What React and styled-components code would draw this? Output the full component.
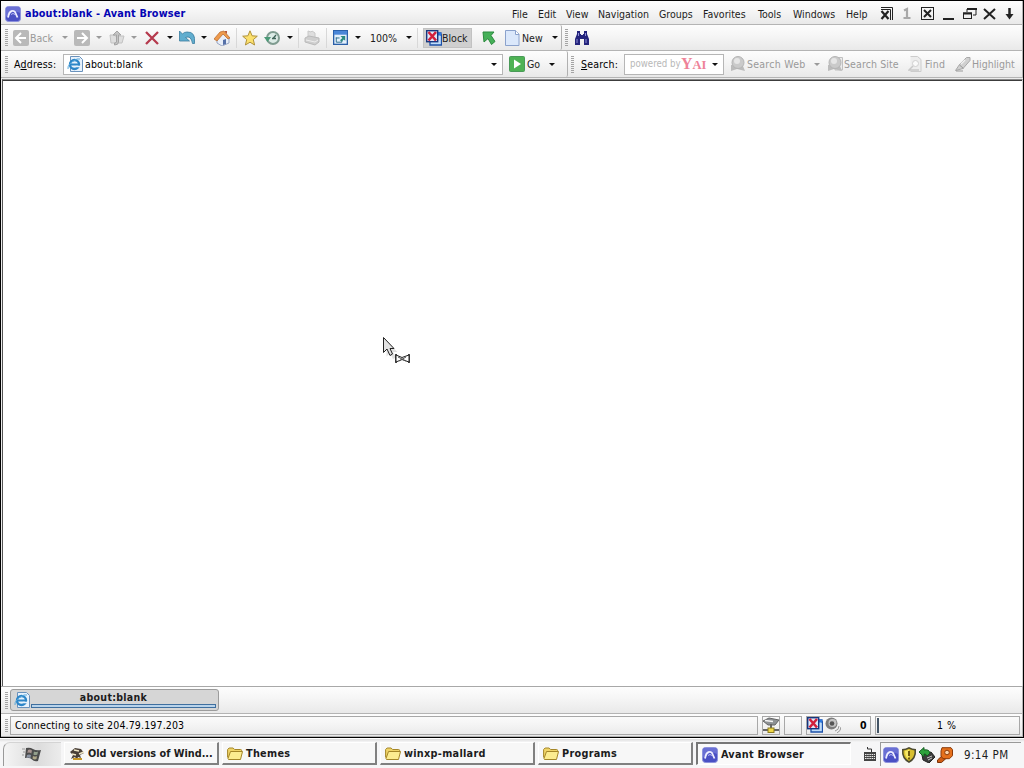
import React from "react";
import styled, { createGlobalStyle, css } from "styled-components";

const GlobalStyle = createGlobalStyle`
	* { box-sizing: border-box; }
	body {
		margin: 0;
		background: #f0f0f0;
		color: #1c1c1c;
		font-family: "DejaVu Sans Condensed", "DejaVu Sans", sans-serif;
		font-stretch: condensed;
		font-size: 10.5px;
		line-height: 14px;
		cursor: default;
		overflow: hidden;
	}
`;

const Desktop = styled.div`
	width: 1024px;
	height: 768px;
	display: flex;
	flex-direction: column;
`;

const Window = styled.div`
	height: 738px;
	border: 1px solid #000;
	background: #ececec;
	display: flex;
	flex-direction: column;
`;

const Band = styled.div`
	display: flex;
	align-items: center;
	flex: none;
	height: ${(p) => p.$h}px;
	padding-left: ${(p) => p.$pad || 0}px;
	border-bottom: 1px solid #b4b4b4;
	border-right: 1px solid #b4b4b4;
	background: linear-gradient(#fdfdfd, #f5f5f5 45%, #e9e9e9);
`;

const TitleBand = styled(Band)`
	padding-top: 2px;
`;

const TabBand = styled(Band)`
	border-top: 1px solid #a8a8a8;
`;

const SubBand = styled.div`
	display: flex;
	align-items: center;
	height: 100%;
	width: ${(p) => p.$w}px;
	border-right: 1px solid #b0b0b0;
	border-radius: 0 2px 2px 0;
`;

const Label = styled.span`
	flex: none;
	width: ${(p) => p.$w}px;
	margin-left: ${(p) => p.$ml || 0}px;
	letter-spacing: ${(p) => p.$ls || 0}px;
	white-space: pre;
	color: ${(p) => (p.$off ? "#9a9a9a" : "inherit")};
`;

const FieldLabel = styled(Label)`
	color: #000;
`;

const Title = styled.span`
	width: 487px;
	margin-left: 4px;
	font-size: 10.8px;
	font-weight: bold;
	letter-spacing: 0.14px;
	color: #0404b4;
`;

const Menu = styled.nav`
	display: flex;
	gap: 10px;
	width: 367px;
`;

const Grip = styled.i`
	flex: none;
	width: 3px;
	height: ${(p) => p.$h || 17}px;
	margin-left: ${(p) => (p.$ml === undefined ? 4 : p.$ml)}px;
	background: repeating-linear-gradient(#a4a4a4 0 1px, transparent 1px 2px);
`;

const Sep = styled.i`
	flex: none;
	width: 1px;
	height: 20px;
	margin-left: ${(p) => p.$ml}px;
	background: #d8d8d8;
`;

const Caret = styled.i`
	flex: none;
	width: 0;
	height: 0;
	margin-left: ${(p) => p.$ml}px;
	border: solid transparent;
	border-width: 3px 3px 0;
	border-top-color: ${(p) => (p.$off ? "#9a9a9a" : "#111")};
`;

const Svg = styled.svg`
	flex: none;
	display: block;
	margin-left: ${(p) => p.$ml || 0}px;
`;

const BlockButton = styled.div`
	display: flex;
	align-items: center;
	width: 49px;
	height: 20px;
	margin-left: 5px;
	background: #cfcfcf;
	border: 1px solid #c2c2c2;
`;

const Combo = styled.div`
	display: flex;
	align-items: center;
	width: ${(p) => p.$w}px;
	height: 21px;
	margin-left: 6px;
	background: #fff;
	border: 1px solid #b6b6b6;
	color: #000;
`;

const Powered = styled.span`
	flex: none;
	width: 50px;
	margin-left: 5px;
	font-size: 9.6px;
	color: #b8b8b8;
	white-space: pre;
`;

const Yahoo = styled.span`
	flex: none;
	width: 29px;
	margin-left: 1px;
	font: bold 16px/17px "Liberation Serif", serif;
	color: #ee8298;
	white-space: nowrap;
	small {
		font-size: 12.5px;
	}
`;

const Page = styled.main`
	flex: 1;
	margin: 1px 0 0 1px;
	border-top: 1px solid #8a8a8a;
	border-left: 1px solid #555;
	border-right: 1px solid #d0d0d0;
	box-shadow: inset 0 1px #3c3c3c;
	background: #fff;
`;

const Tab = styled.div`
	display: flex;
	align-items: flex-end;
	width: 209px;
	height: 22px;
	margin-left: 2px;
	padding: 0 2px 2px 3px;
	border: 1px solid #9c9c9c;
	border-radius: 3px;
	background: #d6d6d6;
`;

const TabBody = styled.div`
	flex: 1;
	text-align: center;
	font-weight: bold;
	letter-spacing: 0.3px;
	padding-right: 19px;
`;

const TabProgress = styled.div`
	height: 4px;
	margin: 0 -19px 0 1px;
	border: 1px solid #3f6f9f;
	background: #b9d3ea;
`;

const Pane = styled.div`
	display: flex;
	align-items: center;
	flex: none;
	width: ${(p) => p.$w}px;
	height: 19px;
	margin-left: ${(p) => p.$ml}px;
	border: 1px solid #a8a8a8;
	color: #000;
`;

const Taskbar = styled.footer`
	display: flex;
	align-items: flex-start;
	flex: 1;
	padding: 3px 0 0 3px;
	border-top: 1px solid #fff;
	background: linear-gradient(#dcdcdc, #f6f6f7 3px, #f6f6f7);
`;

const Start = styled.div`
	width: 58px;
	height: 24px;
	padding: 3px 0 0 18px;
	border-top: 1px solid #d4d4d4;
	border-left: 1px solid #999;
	border-radius: 7px 0 0 0;
	background: linear-gradient(90deg, #f4f4f4, #dcdcdc 60%, #ececec);
`;

const Task = styled.div`
	display: flex;
	align-items: center;
	width: 155px;
	height: 23px;
	margin-left: 3px;
	padding: 2px 0 0 4px;
	font-size: 10.8px;
	font-weight: bold;
	background: #f7f7f7;
	border: solid #fff;
	border-width: 1px 2px 2px 1px;
	border-right-color: #808080;
	border-bottom-color: #808080;
	${(p) =>
		p.$active &&
		css`
			border-width: 2px 1px 1px 2px;
			border-color: #777 #fff #fff #777;
			background: #fafafa;
		`}
`;

const Tray = styled.div`
	display: flex;
	align-items: center;
	width: 141px;
	height: 24px;
	margin-left: 4px;
	border-top: 1px solid #999;
	border-left: 1px solid #999;
	font-size: 11.5px;
`;

const Cursor = styled.div`
	position: absolute;
	left: 382px;
	top: 337px;
`;

const Icon = ({ ml, s = 16, children }) => (
	<Svg $ml={ml} width={s} height={s} viewBox="0 0 16 16">
		{children}
	</Svg>
);

const AvantIcon = (p) => (
	<Icon {...p}>
		<rect x=".5" y=".5" width="15" height="15" rx="3" fill="#4a50c4" stroke="#8d92dc" />
		<path d="M1 3q0-2 2-2h10q2 0 2 2v4Q8 3 1 11z" fill="#6a70d4" />
		<path d="M3 11.500Q4 5.500 7 5q2-.5 3 1l2.500 5.500" fill="none" stroke="#eef" strokeWidth="1.800" />
		<path d="M6 8.500Q8 6.500 10 8.500" fill="none" stroke="#b9bcf4" />
	</Icon>
);

const ArrowBox = ({ ml, flip }) => (
	<Icon ml={ml}>
		<rect width="16" height="16" rx="2" fill="#b9b9b9" />
		<path d="M3 8h10M8 3L3 8l5 5" transform={flip ? "matrix(-1 0 0 1 16 0)" : undefined} fill="none" stroke="#fff" strokeWidth="2" />
	</Icon>
);

const UpIcon = (p) => (
	<Icon {...p}>
		<path d="M1 5h4l1 1h9l-2 7H2z" fill="#dedede" stroke="#c2c2c2" />
		<path d="M8 1l4 4H9.500v7q0 3-4 3v-2q2 0 2-1V5H4z" fill="#c4c4c4" stroke="#a4a4a4" />
	</Icon>
);

const StopIcon = (p) => (
	<Icon {...p}>
		<path d="M2 2l12 12M14 2L2 14" stroke="#b53a4d" strokeWidth="2.300" />
	</Icon>
);

const UndoIcon = (p) => (
	<Icon {...p}>
		<path d="M.5 1v10h10L6.500 7.500Q12 5 13.500 13.500h2Q17 1.500 8 2 5 2 3.500 4z" fill="#62aecf" stroke="#3a7c9e" strokeWidth=".8" />
	</Icon>
);

const HomeIcon = (p) => (
	<Icon {...p}>
		<path d="M3 8l6-5 6 5v5l-7 3-5-3z" fill="#e8eef8" stroke="#8494b8" strokeWidth=".8" />
		<path d="M0 9L6 2l4-1 6 7-2 1-5-5-6 7z" fill="#ee9a4c" stroke="#b4652a" strokeWidth=".7" />
		<path d="M9 10l3-1v5l-3 1z" fill="#5570a8" />
		<path d="M11 1h2v3l-2-2z" fill="#b95a3a" />
	</Icon>
);

const StarIcon = (p) => (
	<Icon {...p}>
		<path d="M8 .8l2.100 5 5.200.4-4 3.400 1.300 5.400L8 12.200 3.400 15l1.300-5.400-4-3.400 5.200-.4z" fill="#fbe06d" stroke="#b0923c" />
	</Icon>
);

const HistoryIcon = (p) => (
	<Icon {...p}>
		<circle cx="9" cy="8" r="6" fill="#dcebe6" stroke="#7f9c90" strokeWidth="2" />
		<path d="M0 7h7L3.500 12z" fill="#4b9a77" />
		<path d="M9 8.500L12 5M8 8.500h4" stroke="#41655a" strokeWidth="1.300" />
	</Icon>
);

const PrintIcon = (p) => (
	<Icon {...p}>
		<path d="M4 8V1l3 1 1-1 3 2v6" fill="#dedede" stroke="#c8c8c8" />
		<path d="M1 8l4-2 10 2v4l-4 3-10-3z" fill="#cecece" stroke="#bababa" />
		<path d="M2 10l9 2 3-2" stroke="#eee" fill="none" />
	</Icon>
);

const ResizeIcon = (p) => (
	<Icon {...p} s={15}>
		<rect x=".7" y=".7" width="14.600" height="14.600" fill="#e3effb" stroke="#2a5fa8" strokeWidth="1.400" />
		<path d="M1 1h14v4H1z" fill="#4a86d8" />
		<path d="M3 8.500h4M3.500 8v5h6v-3" fill="none" stroke="#2a6b8c" />
		<path d="M8 6.500h5v5L11.500 10 9 12.500 7.500 11 10 8.500z" fill="#2a8a80" />
	</Icon>
);

const BlockIcon = (p) => (
	<Icon {...p}>
		<path d="M10 3h5v2h.5v10H4v-4" fill="#bedcfa" stroke="#1c50a8" strokeWidth="1.300" />
		<path d="M10 4h5" stroke="#2a78e0" strokeWidth="3" />
		<rect x=".7" y=".7" width="11" height="11" fill="#dfe8f8" stroke="#16357f" strokeWidth="1.400" />
		<path d="M2.500 2l7.500 8.500M10 2L2.500 10.500" stroke="#d21f3c" strokeWidth="2.600" />
	</Icon>
);

const GreenArrow = (p) => (
	<Icon {...p}>
		<path d="M2 2h11l-3 3.500 4 6-3.500 3L7 8.500 3 12z" fill="#45b058" stroke="#2b8a3e" />
	</Icon>
);

const PageIcon = (p) => (
	<Icon {...p}>
		<path d="M.5.5h10l3.500 3.500v11.500h-13.500z" fill="#dbe8fb" stroke="#8ba2cc" />
		<path d="M10.500.5v4h3.500" fill="#fff" stroke="#8ba2cc" />
	</Icon>
);

const Binoculars = (p) => (
	<Icon {...p}>
		<path d="M3 1h3v3h1v1h2V4h1V1h3v3l2 5v6h-5V9H6v6H1V9l2-5z" fill="#24247c" />
		<path d="M3 9v4M12 9v4M4.500 3v3M11.500 3v3" stroke="#8f8fd6" />
	</Icon>
);

const IeIcon = (p) => (
	<Icon {...p}>
		<path d="M3.500.5h9l3 3v12h-12z" fill="#e8f2fc" stroke="#6a92bc" />
		<circle cx="7.500" cy="8.500" r="4.500" fill="none" stroke="#2d86c8" strokeWidth="2.400" />
		<path d="M4 8.500h7.500" stroke="#2d86c8" strokeWidth="2" />
		<path d="M9.500 10.500h4" stroke="#e8f2fc" strokeWidth="1.600" />
		<path d="M1 13Q0 8 10 3l3 0" fill="none" stroke="#58a8dc" />
	</Icon>
);

const GoIcon = (p) => (
	<Icon {...p}>
		<rect x=".5" y=".5" width="15" height="15" rx="1" fill="#4eb254" stroke="#4a9a58" />
		<path d="M5 3.500v9l7-4.500z" fill="#fff" />
	</Icon>
);

const SearchIcon = ({ ml, page }) => (
	<Icon ml={ml}>
		{page && <path d="M8 1.500h7.500V14H8z" fill="#ececec" stroke="#c0c0c0" />}
		<path d="M1 9v6l6-2 8 2-2-5z" fill="#bcbcbc" />
		<circle cx="8" cy="6.500" r="6" fill="#cacaca" stroke="#b4b4b4" />
		<circle cx="7" cy="5" r="3" fill="#e6e6e6" />
	</Icon>
);

const FindIcon = (p) => (
	<Icon {...p}>
		<path d="M2.500.5h7l3.500 3v12H2.500" fill="#ededed" stroke="#cccccc" />
		<circle cx="7.500" cy="7.500" r="3" fill="#fafafa" stroke="#cfcfcf" />
		<path d="M5 10l-4 4h10" fill="none" stroke="#c8c8c8" strokeWidth="1.500" />
	</Icon>
);

const PenIcon = (p) => (
	<Icon {...p}>
		<path d="M.5 14.500l4-6 7-7 3.500 0v3L8 12.500z" fill="#d0d0d0" stroke="#a8a8a8" />
		<path d="M4.500 9l4 3.500M1 15h7" stroke="#999" />
		<path d="M10 4l-4 4" stroke="#f2f2f2" strokeWidth="1.500" />
	</Icon>
);

const WindowControls = () => (
	<Svg width="140" height="16" viewBox="0 0 140 16" fill="none" stroke="#222">
		<path d="M2 1.500h11.500V14M2 3.500h9.500V14" />
		<path d="M2.500 5l7 8M9.500 5l-7 8" strokeWidth="2.200" />
		<path d="M25 4.500l3-1.500v9M24.500 12h7" stroke="#a8a8a8" strokeWidth="2.200" />
		<rect x="42.500" y="1.500" width="12" height="12" />
		<path d="M45 4l7 7M52 4l-7 7" strokeWidth="2" />
		<path d="M64 13h11" strokeWidth="2" />
		<path d="M88 6V3h9v6h-3" />
		<path d="M88 3h10" strokeWidth="2" />
		<rect x="84.500" y="7" width="8" height="5.500" />
		<path d="M84 7.500h9" strokeWidth="2" />
		<path d="M105 3l11 10M116 3l-11 10" strokeWidth="2" />
		<path d="M130.500 2v7" strokeWidth="2.500" />
		<path d="M126.500 8h8l-4 5.500z" fill="#222" stroke="none" />
	</Svg>
);

const FolderIcon = () => (
	<Icon>
		<path d="M.6 11.500V3.500l1.500-1.500h4l1.500 1.500h6q1 0 1 1v3" fill="#f0d468" stroke="#a48628" />
		<path d="M1 12.500L3.500 5.500h12l-2 8h-12z" fill="#fcec90" stroke="#a48628" />
	</Icon>
);

const BirdIcon = () => (
	<Icon>
		<path d="M1 6l5-4 6 1 3 4-4 2 1 3-3-1-1 3-2-3-4 2 2-4z" fill="#4a4038" />
		<path d="M5 4l5 1M10 8l5-2M3 8l4 1" stroke="#f0e6c8" strokeWidth="1.500" />
		<path d="M4 13h9" stroke="#c89828" strokeWidth="2" />
	</Icon>
);

const FlagIcon = () => (
	<Svg width="20" height="17" viewBox="0 0 20 17">
		<path d="M4 2q4-1 7 1t8 1l-3 11q-4 1-6-1.500t-7-1.500z" fill="#4c4c4c" />
		<path d="M6 4q2-1 4 .5L9.300 7.500q-2-1.500-4-.5z" fill="#a89490" />
		<path d="M12 5.500q2 1 4 0l-.6 3q-2 1-4 0z" fill="#94a08c" />
		<path d="M5 9q2-1 4 0l-.6 3q-2-1-4 0z" fill="#8c94a4" />
		<path d="M11 10q2 1 4 0l-.5 3q-2 1-4-.5z" fill="#b0a888" />
		<path d="M0 3h3M1 6h2M0 9h2" stroke="#999" />
	</Svg>
);

const NetIcon = () => (
	<Icon>
		<path d="M0 4l6-3 10 2-4 5H5z" fill="#8d9194" stroke="#666" />
		<path d="M2 3.500l8 1" stroke="#f5f5f5" strokeWidth="1.500" />
		<path d="M8 7v6M0 13h16" stroke="#666" strokeWidth="2" />
		<rect x="5" y="11" width="6" height="4.500" fill="#f0d848" stroke="#8c7a20" />
	</Icon>
);

const SpeakerIcon = (p) => (
	<Icon {...p}>
		<circle cx="6.500" cy="6.500" r="6" fill="#7d7d7d" />
		<circle cx="7.500" cy="6" r="4" fill="#c4c4c4" />
		<circle cx="7" cy="6.500" r="2.300" fill="#555" />
		<path d="M10 14q4-1 4-5M12 16q4-2 4-6" fill="none" stroke="#999" />
	</Icon>
);

const KeyboardIcon = (p) => (
	<Svg $ml={p.ml} width="12" height="20" viewBox="0 0 12 20">
		<path d="M3.500 5v2h4v3" fill="none" stroke="#333" />
		<rect y="10" width="12" height="9" fill="#444" />
		<path d="M1 12.500h10M1 14.500h10M1 16.500h10" stroke="#eee" strokeDasharray="1.500 .7" />
	</Svg>
);

const ShieldIcon = (p) => (
	<Icon {...p}>
		<path d="M1 2q4 0 7-2 3 2 7 2 1 10-7 14Q0 12 1 2z" fill="#4c4a30" />
		<path d="M2.500 3.500Q6 3 8 1.800q2 1.200 5.500 1.700Q14 10.500 8 14 2 10.500 2.500 3.500z" fill="#d8c030" />
		<path d="M4 4q2-.2 4-1.200V13Q4 10 4 4z" fill="#f6e868" />
		<path d="M8 4v5M8 10.500v2" stroke="#6e5a10" strokeWidth="2" />
	</Icon>
);

const PlugIcon = (p) => (
	<Icon {...p}>
		<path d="M3 8l9-3 4 5-6 6-6-3z" fill="#3c3c3c" stroke="#222" />
		<path d="M8 11l5-2M9 13l4-2" stroke="#c8c8c8" />
		<path d="M0 5l5-4.500v2.500q5-1 6 3l-3 3Q7 6.500 5 7v3z" fill="#2ea33c" stroke="#145c20" />
	</Icon>
);

const KeyIcon = (p) => (
	<Icon {...p}>
		<path d="M6 8l-5.500 5v2.500h4l5-4.500" fill="#d05c14" stroke="#7a3208" />
		<path d="M5 .7h9l1.500 2v6l-3 3H6L4 9V4z" fill="#e5701c" stroke="#8a3a0a" />
		<circle cx="10" cy="5.500" r="2.300" fill="#fbd4ac" stroke="#8a3a0a" />
	</Icon>
);

const menus = [
	["File", 16],
	["Edit", 18],
	["View", 22],
	["Navigation", 51],
	["Groups", 34],
	["Favorites", 45],
	["Tools", 25],
	["Windows", 43],
	["Help", 21],
];

const folders = ["Themes", "winxp-mallard", "Programs"];

export default function App() {
	return (
		<Desktop>
			<GlobalStyle />
			<Window>
				<TitleBand $h={24} $pad={4}>
					<AvantIcon />
					<Title>about:blank - Avant Browser</Title>
					<Menu>
						{menus.map(([name, w]) => (
							<Label key={name} $w={w}>
								{name}
							</Label>
						))}
					</Menu>
					<WindowControls />
				</TitleBand>
				<Band $h={26}>
					<SubBand $w={561}>
						<Grip />
						<ArrowBox ml={5} />
						<Label $ml={1} $w={24} $off>Back</Label>
						<Caret $ml={8} $off />
						<ArrowBox ml={6} flip />
						<Caret $ml={6} $off />
						<UpIcon ml={7} />
						<Caret $ml={6} $off />
						<StopIcon ml={7} />
						<Caret $ml={7} />
						<UndoIcon ml={6} />
						<Caret $ml={6} />
						<HomeIcon ml={7} />
						<Sep $ml={6} />
						<StarIcon ml={5} />
						<HistoryIcon ml={6} />
						<Caret $ml={7} />
						<Sep $ml={5} />
						<PrintIcon ml={5} />
						<Sep $ml={6} />
						<ResizeIcon ml={6} />
						<Caret $ml={7} />
						<Label $ml={9} $w={29}>100%</Label>
						<Caret $ml={7} />
						<Sep $ml={5} />
						<BlockButton>
							<BlockIcon ml={2} />
							<Label $w={27}>Block</Label>
						</BlockButton>
						<GreenArrow ml={9} />
						<PageIcon ml={8} />
						<Label $ml={1} $w={23}>New</Label>
						<Caret $ml={7} />
					</SubBand>
					<Grip $ml={3} />
					<Binoculars ml={6} />
				</Band>
				<Band $h={27}>
					<SubBand $w={567}>
						<Grip />
						<FieldLabel $ml={6} $w={43} $ls={0.2}>
							A<u>d</u>dress:
						</FieldLabel>
						<Combo $w={440}>
							<IeIcon ml={3} />
							<Label $ml={2} $w={401} $ls={0.15}>about:blank</Label>
							<Caret $ml={5} />
						</Combo>
						<GoIcon ml={6} />
						<Label $ml={2} $w={14}>Go</Label>
						<Caret $ml={8} />
					</SubBand>
					<Grip $ml={3} />
					<FieldLabel $ml={7} $w={37} $ls={0.2}>
						<u>S</u>earch:
					</FieldLabel>
					<Combo $w={100}>
						<Powered>powered by</Powered>
						<Yahoo>
							Y<small>AI</small>
						</Yahoo>
						<Caret $ml={2} />
					</Combo>
					<SearchIcon ml={6} />
					<Label $ml={1} $w={59} $ls={0.25} $off>Search Web</Label>
					<Caret $ml={8} $off />
					<SearchIcon ml={7} page />
					<Label $ml={1} $w={55} $ls={0.1} $off>Search Site</Label>
					<FindIcon ml={9} />
					<Label $ml={1} $w={21} $ls={0.2} $off>Find</Label>
					<PenIcon ml={9} />
					<Label $ml={1} $w={43} $off>Highlight</Label>
				</Band>
				<Page />
				<TabBand $h={28}>
					<Grip $h={17} />
					<Tab>
						<IeIcon />
						<TabBody>
							about:blank
							<TabProgress />
						</TabBody>
					</Tab>
				</TabBand>
				<Band $h={23}>
					<Grip $h={13} />
					<Pane $w={748} $ml={2}>
						<Label $ml={4} $w={200} $ls={0.15}>Connecting to site 204.79.197.203</Label>
					</Pane>
					<Pane $w={18} $ml={4}>
						<NetIcon />
					</Pane>
					<Pane $w={18} $ml={4} />
					<Pane $w={65} $ml={4}>
						<BlockIcon />
						<SpeakerIcon ml={2} />
						<Label $ml={19} $w={8}>
							<b>0</b>
						</Label>
					</Pane>
					<Pane $w={145} $ml={4}>
						<Svg $ml={1} width="3" height="15">
							<path d="M1 0v15" stroke="#456" strokeWidth="2" />
						</Svg>
						<Label $ml={57} $w={30} $ls={0.5}>1 %</Label>
					</Pane>
				</Band>
			</Window>
			<Taskbar>
				<Start>
					<FlagIcon />
				</Start>
				<Task>
					<BirdIcon />
					<Label $ml={3}>Old versions of Wind...</Label>
				</Task>
				{folders.map((name) => (
					<Task key={name}>
						<FolderIcon />
						<Label $ml={3} $ls={0.28}>{name}</Label>
					</Task>
				))}
				<Task $active>
					<AvantIcon />
					<Label $ml={3} $ls={0.24}>Avant Browser</Label>
				</Task>
				<KeyboardIcon ml={13} />
				<Tray>
					<AvantIcon ml={2} />
					<ShieldIcon ml={2} />
					<PlugIcon ml={2} />
					<KeyIcon ml={2} />
					<Label $ml={11} $w={46} $ls={0.4}>9:14 PM</Label>
				</Tray>
			</Taskbar>
			<Cursor>
				<svg width="32" height="30" viewBox="0 0 32 30">
					<path d="M2.500 2.500v15l3.500-3.500 3 6 3-1.500-3-5.500h4.500z" fill="#888" opacity=".25" transform="translate(2 2)" />
					<path d="M1.500.5v15l3.500-3.500 3 6.500 2.500-1.500-2.500-5.500H12z" fill="#e2e2e2" stroke="#222" />
					<path d="M14 17v9M27 17v9" stroke="#111" strokeWidth="1.500" />
					<path d="M14 18l6 2.500 7-2.500v7l-7-2.500-6 2.500z" fill="#fff" stroke="#222" />
					<path d="M16 20l8 4M17 24l7-4" stroke="#555" fill="none" />
				</svg>
			</Cursor>
		</Desktop>
	);
}
